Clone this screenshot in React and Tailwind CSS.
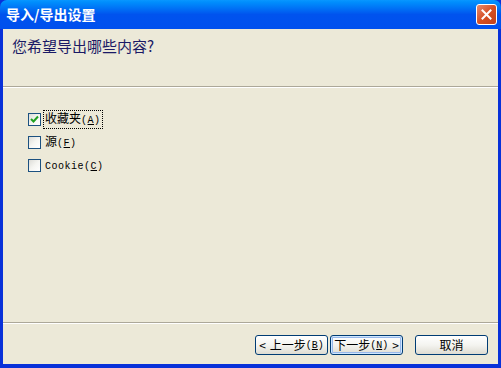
import { useState } from "react";

const cjk = { fontFamily: '"Noto Sans CJK SC", "Liberation Sans", sans-serif' };
const mono = { fontFamily: '"Liberation Mono", monospace' };

function Checkbox({ checked }) {
  return (
    <span className="relative inline-block w-[13px] h-[13px] border border-[#1c5180] bg-gradient-to-br from-[#dcdcd7] via-[#f5f5f1] to-white shrink-0">
      {checked && (
        <svg className="absolute left-[1px] top-[1px]" width="9" height="9" viewBox="0 0 9 9">
          <path d="M1 4 L3.5 6.5 L8 1.5" fill="none" stroke="#21a121" strokeWidth="2" />
        </svg>
      )}
    </span>
  );
}

function Option({ label, accel, checked, focused, ascii }) {
  return (
    <div className="flex items-center h-[23px]">
      <Checkbox checked={checked} />
      <span
        className={`ml-[2px] px-[1px] leading-[14px] text-[12px] text-black ${
          focused ? "border border-dotted border-black" : "border border-transparent"
        }`}
        style={cjk}
      >
        {ascii ? (
          <span style={mono} className="text-[10px] tracking-[0.5px]">
            {label}
          </span>
        ) : (
          label
        )}
        <span style={mono} className="text-[10px] tracking-[0.5px]">
          (<u>{accel}</u>)
        </span>
      </span>
    </div>
  );
}

function XPButton({ children, isDefault }) {
  return (
    <button
      className={`w-[73px] h-[20px] rounded-[3px] border border-[#003c74] bg-gradient-to-b from-white via-[#f4f4f0] to-[#dedcd2] text-[12px] text-black flex items-center justify-center ${
        isDefault ? "shadow-[inset_0_0_0_1px_#cee7ff,inset_0_0_0_2px_#98b8ea]" : ""
      }`}
      style={cjk}
    >
      {children}
    </button>
  );
}

export default function App() {
  const [items] = useState([
    { label: "收藏夹", accel: "A", checked: true, focused: true },
    { label: "源", accel: "F" },
    { label: "Cookie", accel: "C", ascii: true },
  ]);

  return (
    <div className="w-[501px] h-[368px] flex flex-col bg-[#0831d9] overflow-hidden">
      {/* Title bar */}
      <div className="h-[29px] shrink-0 flex items-center justify-between pl-[6px] pr-[4px] bg-gradient-to-b from-[#0997ff] via-[#0053ee] to-[#0050ee] rounded-t-[7px]">
        <span className="text-white text-[14px] font-bold" style={cjk}>
          导入/导出设置
        </span>
        <div className="w-[21px] h-[21px] rounded-[3px] border border-white bg-gradient-to-br from-[#e58a6e] via-[#d64f22] to-[#c1411a] flex items-center justify-center">
          <svg width="11" height="11" viewBox="0 0 11 11">
            <path d="M1.5 1.5 L9.5 9.5 M9.5 1.5 L1.5 9.5" stroke="white" strokeWidth="2" strokeLinecap="square" />
          </svg>
        </div>
      </div>

      {/* Client area */}
      <div className="flex-1 mx-[3px] mb-[4px] bg-[#ece9d8] flex flex-col">
        <div className="h-[57px] shrink-0 pl-[9px] pt-[5px]">
          <span className="text-[15px] text-[#1a1a66]" style={cjk}>
            您希望导出哪些内容?
          </span>
        </div>
        <div className="h-[1px] bg-[#aca899]" />
        <div className="h-[1px] bg-white" />

        <div className="flex-1 pl-[25px] pt-[20px] flex flex-col">
          {items.map((it) => (
            <Option key={it.accel} {...it} />
          ))}
        </div>

        <div className="h-[1px] bg-[#aca899]" />
        <div className="h-[1px] bg-white" />
        <div className="h-[40px] shrink-0 flex items-start justify-end pt-[11px] pr-[10px]">
          <XPButton>
            <span className="mr-[4px]">&lt;</span>上一步
            <span style={mono} className="text-[10px]">
              (<u>B</u>)
            </span>
          </XPButton>
          <div className="w-[2px]" />
          <XPButton isDefault>
            下一步
            <span style={mono} className="text-[10px]">
              (<u>N</u>)
            </span>
            <span className="ml-[4px]">&gt;</span>
          </XPButton>
          <div className="w-[12px]" />
          <XPButton>取消</XPButton>
        </div>
      </div>
    </div>
  );
}
